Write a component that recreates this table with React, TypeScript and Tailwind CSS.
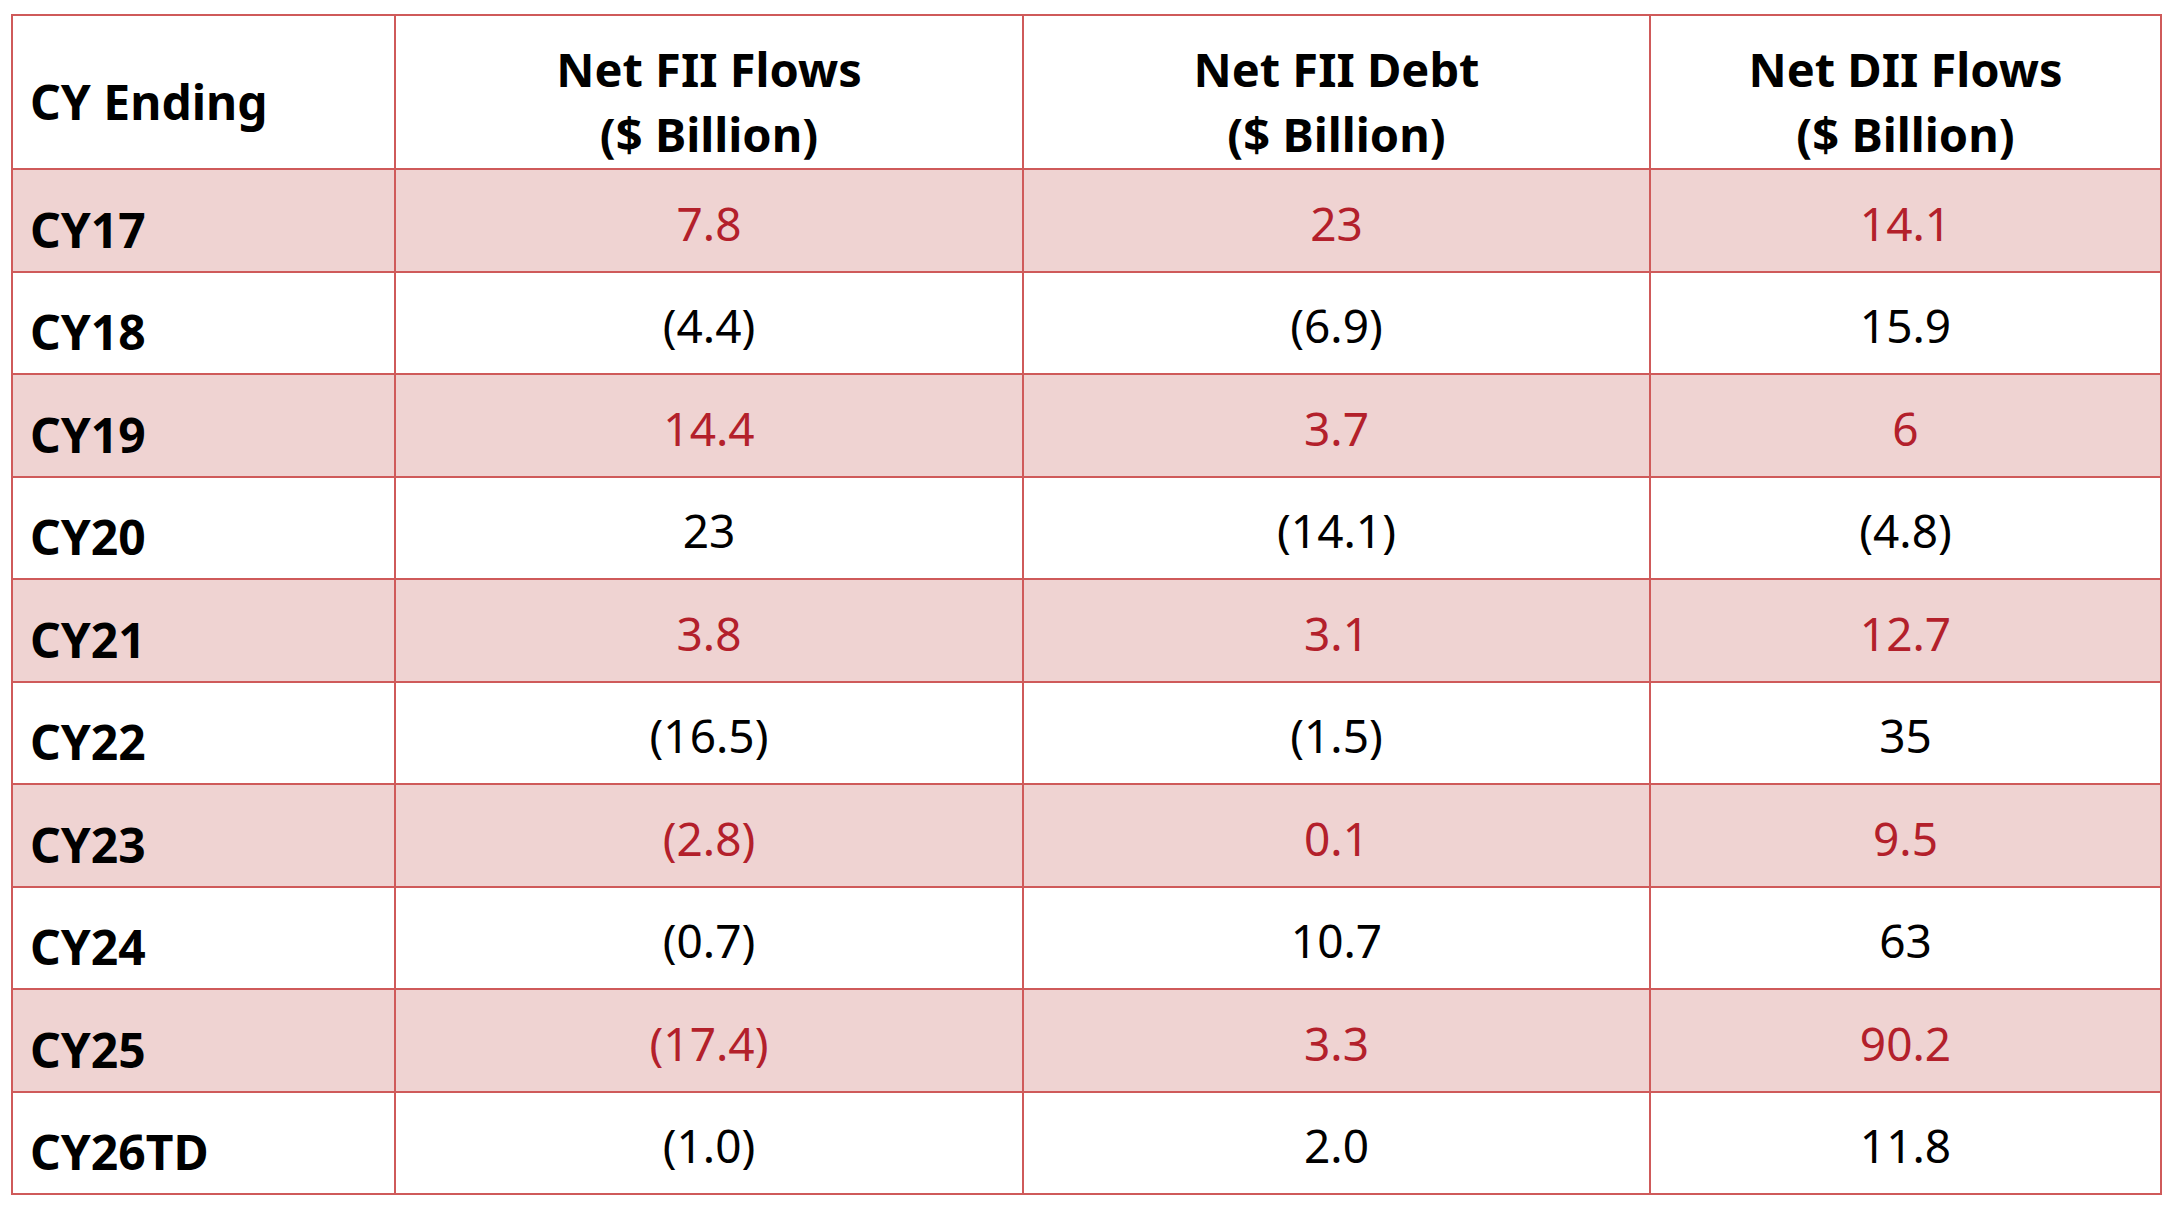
import React from "react";

type Row = {
  label: string;
  fii: string;
  debt: string;
  dii: string;
};

const rows: Row[] = [
  { label: "CY17", fii: "7.8", debt: "23", dii: "14.1" },
  { label: "CY18", fii: "(4.4)", debt: "(6.9)", dii: "15.9" },
  { label: "CY19", fii: "14.4", debt: "3.7", dii: "6" },
  { label: "CY20", fii: "23", debt: "(14.1)", dii: "(4.8)" },
  { label: "CY21", fii: "3.8", debt: "3.1", dii: "12.7" },
  { label: "CY22", fii: "(16.5)", debt: "(1.5)", dii: "35" },
  { label: "CY23", fii: "(2.8)", debt: "0.1", dii: "9.5" },
  { label: "CY24", fii: "(0.7)", debt: "10.7", dii: "63" },
  { label: "CY25", fii: "(17.4)", debt: "3.3", dii: "90.2" },
  { label: "CY26TD", fii: "(1.0)", debt: "2.0", dii: "11.8" }
];

const headers = [
  { top: "Net FII Flows", bottom: "($ Billion)" },
  { top: "Net FII Debt", bottom: "($ Billion)" },
  { top: "Net DII Flows", bottom: "($ Billion)" }
];

export default function App() {
  return (
    <div className="min-h-screen bg-white pl-[11px] pt-[14px] font-['Noto_Sans',sans-serif]">
      <div className="grid w-[2151px] grid-cols-[381px_626px_625px_509px] gap-[2px] bg-[#cf5a5a] p-[2px]">
        <div className="flex h-[152px] items-center bg-white pl-[17px] pt-[20px] text-[48px] font-bold leading-none text-black">
          CY Ending
        </div>
        {headers.map((h) => (
          <div
            key={h.top}
            className="flex h-[152px] flex-col items-center justify-center bg-white pt-[20px] text-center text-[47px] font-bold leading-[65px] text-black"
          >
            <span>{h.top}</span>
            <span>{h.bottom}</span>
          </div>
        ))}

        {rows.map((row, i) => {
          const shaded = i % 2 === 0;
          const bg = shaded ? "bg-[#efd3d2]" : "bg-white";
          const tone = shaded ? "text-[#b3202b]" : "text-black";
          const height = i % 2 === 0 ? "h-[101px]" : "h-[100px]";
          return (
            <React.Fragment key={row.label}>
              <div className={`${bg} ${height} flex items-center pl-[17px] pt-[18px] text-[48px] font-bold leading-none text-black`}>
                {row.label}
              </div>
              {[row.fii, row.debt, row.dii].map((value, j) => (
                <div
                  key={j}
                  className={`${bg} ${height} ${tone} flex items-center justify-center pt-[4px] text-[46px] leading-none`}
                >
                  {value}
                </div>
              ))}
            </React.Fragment>
          );
        })}
      </div>
    </div>
  );
}
